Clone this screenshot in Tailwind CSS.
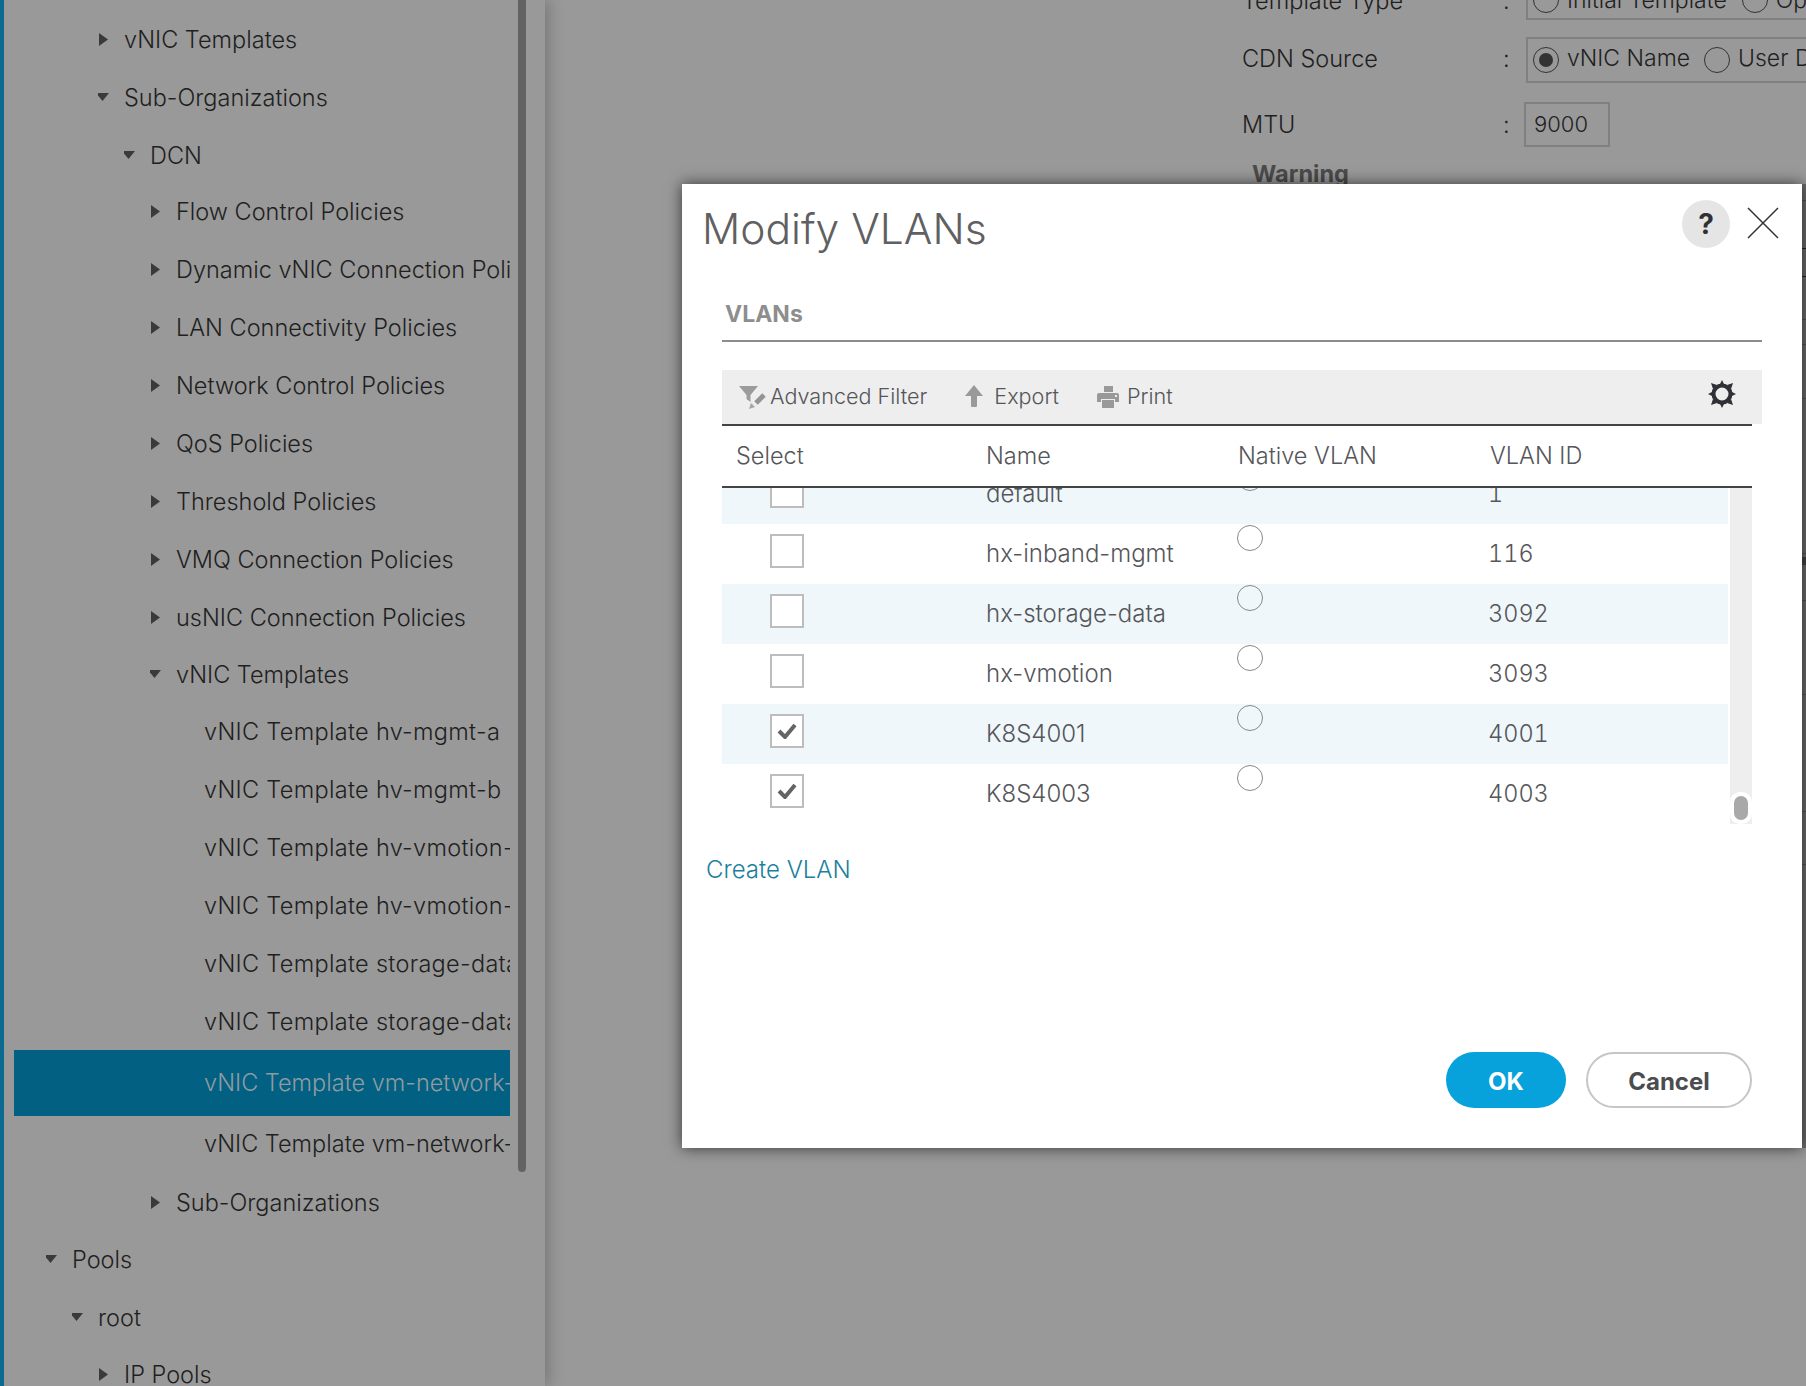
<!DOCTYPE html>
<html lang="en">
<head>
    <meta charset="UTF-8">
    <script src="https://cdn.jsdelivr.net/npm/@tailwindcss/browser@4"></script>
    <title>Modify VLANs</title>
</head>
<body class="bg-[#999999] font-['Inter',sans-serif] font-light">
<div class="relative w-[1806px] h-[1386px] overflow-hidden flex text-[23.5px] text-[#1f1f1f]">

    <!-- left tree -->
    <div class="w-[545px] h-full shrink-0 flex shadow-[4px_0_14px_rgba(0,0,0,0.22)] bg-[#999999] relative">
        <div class="w-[4px] h-full bg-[#0b6a8f] shrink-0"></div>
        <div class="w-[506px] shrink-0 pt-[11px] overflow-hidden">
            <div class="h-[58px] flex items-center pl-[94px] gap-[14px]"><svg class="w-[12px] h-[14px] shrink-0" viewBox="0 0 12 14"><path d="M1 0l9 6.5-9 6.5z" fill="#3a3a3a"/></svg><span class="whitespace-nowrap">vNIC Templates</span></div>
            <div class="h-[58px] flex items-center pl-[94px] gap-[14px]"><svg class="w-[12px] h-[14px] shrink-0" viewBox="0 0 12 14"><path d="M-2 2h13l-6.5 8z" fill="#3a3a3a"/></svg><span class="whitespace-nowrap">Sub-Organizations</span></div>
            <div class="h-[57px] flex items-center pl-[120px] gap-[14px]"><svg class="w-[12px] h-[14px] shrink-0" viewBox="0 0 12 14"><path d="M-2 2h13l-6.5 8z" fill="#3a3a3a"/></svg><span class="whitespace-nowrap">DCN</span></div>
            <div class="h-[56px] flex items-center pl-[146px] gap-[14px]"><svg class="w-[12px] h-[14px] shrink-0" viewBox="0 0 12 14"><path d="M1 0l9 6.5-9 6.5z" fill="#3a3a3a"/></svg><span class="whitespace-nowrap">Flow Control Policies</span></div>
            <div class="h-[59px] flex items-center pl-[146px] gap-[14px]"><svg class="w-[12px] h-[14px] shrink-0" viewBox="0 0 12 14"><path d="M1 0l9 6.5-9 6.5z" fill="#3a3a3a"/></svg><span class="whitespace-nowrap">Dynamic vNIC Connection Poli</span></div>
            <div class="h-[58px] flex items-center pl-[146px] gap-[14px]"><svg class="w-[12px] h-[14px] shrink-0" viewBox="0 0 12 14"><path d="M1 0l9 6.5-9 6.5z" fill="#3a3a3a"/></svg><span class="whitespace-nowrap">LAN Connectivity Policies</span></div>
            <div class="h-[58px] flex items-center pl-[146px] gap-[14px]"><svg class="w-[12px] h-[14px] shrink-0" viewBox="0 0 12 14"><path d="M1 0l9 6.5-9 6.5z" fill="#3a3a3a"/></svg><span class="whitespace-nowrap">Network Control Policies</span></div>
            <div class="h-[58px] flex items-center pl-[146px] gap-[14px]"><svg class="w-[12px] h-[14px] shrink-0" viewBox="0 0 12 14"><path d="M1 0l9 6.5-9 6.5z" fill="#3a3a3a"/></svg><span class="whitespace-nowrap">QoS Policies</span></div>
            <div class="h-[58px] flex items-center pl-[146px] gap-[14px]"><svg class="w-[12px] h-[14px] shrink-0" viewBox="0 0 12 14"><path d="M1 0l9 6.5-9 6.5z" fill="#3a3a3a"/></svg><span class="whitespace-nowrap">Threshold Policies</span></div>
            <div class="h-[58px] flex items-center pl-[146px] gap-[14px]"><svg class="w-[12px] h-[14px] shrink-0" viewBox="0 0 12 14"><path d="M1 0l9 6.5-9 6.5z" fill="#3a3a3a"/></svg><span class="whitespace-nowrap">VMQ Connection Policies</span></div>
            <div class="h-[58px] flex items-center pl-[146px] gap-[14px]"><svg class="w-[12px] h-[14px] shrink-0" viewBox="0 0 12 14"><path d="M1 0l9 6.5-9 6.5z" fill="#3a3a3a"/></svg><span class="whitespace-nowrap">usNIC Connection Policies</span></div>
            <div class="h-[56px] flex items-center pl-[146px] gap-[14px]"><svg class="w-[12px] h-[14px] shrink-0" viewBox="0 0 12 14"><path d="M-2 2h13l-6.5 8z" fill="#3a3a3a"/></svg><span class="whitespace-nowrap">vNIC Templates</span></div>
            <div class="h-[58px] flex items-center pl-[200px] whitespace-nowrap tracking-[0.3px]">vNIC Template hv-mgmt-a</div>
            <div class="h-[58px] flex items-center pl-[200px] whitespace-nowrap tracking-[0.3px]">vNIC Template hv-mgmt-b</div>
            <div class="h-[58px] flex items-center pl-[200px] whitespace-nowrap tracking-[0.3px]">vNIC Template hv-vmotion-</div>
            <div class="h-[58px] flex items-center pl-[200px] whitespace-nowrap tracking-[0.3px]">vNIC Template hv-vmotion-</div>
            <div class="h-[58px] flex items-center pl-[200px] whitespace-nowrap tracking-[0.3px]">vNIC Template storage-data</div>
            <div class="h-[57px] flex items-center pl-[200px] whitespace-nowrap tracking-[0.3px]">vNIC Template storage-data</div>
            <div class="h-[66px] ml-[10px] flex items-center pl-[190px] whitespace-nowrap bg-[#026082] text-[#8f9ba1]">vNIC Template vm-network-</div>
            <div class="h-[56px] flex items-center pl-[200px] whitespace-nowrap">vNIC Template vm-network-</div>
            <div class="h-[62px] flex items-center pl-[146px] gap-[14px]"><svg class="w-[12px] h-[14px] shrink-0" viewBox="0 0 12 14"><path d="M1 0l9 6.5-9 6.5z" fill="#3a3a3a"/></svg><span class="whitespace-nowrap">Sub-Organizations</span></div>
            <div class="h-[52px] flex items-center pl-[42px] gap-[14px]"><svg class="w-[12px] h-[14px] shrink-0" viewBox="0 0 12 14"><path d="M-2 2h13l-6.5 8z" fill="#3a3a3a"/></svg><span class="whitespace-nowrap">Pools</span></div>
            <div class="h-[64px] flex items-center pl-[68px] gap-[14px]"><svg class="w-[12px] h-[14px] shrink-0" viewBox="0 0 12 14"><path d="M-2 2h13l-6.5 8z" fill="#3a3a3a"/></svg><span class="whitespace-nowrap">root</span></div>
            <div class="h-[50px] flex items-center pl-[94px] gap-[14px]"><svg class="w-[12px] h-[14px] shrink-0" viewBox="0 0 12 14"><path d="M1 0l9 6.5-9 6.5z" fill="#3a3a3a"/></svg><span class="whitespace-nowrap">IP Pools</span></div>
        </div>
        <!-- tree scrollbar -->
        <div class="w-[8px] h-[1172px] ml-[8px] bg-[#636363] rounded-b-[4px] shrink-0"></div>
    </div>

    <!-- form behind the dialog -->
    <div class="flex-1 pl-[697px] -mt-[18px] min-w-0 overflow-hidden">
        <div class="h-[38px] flex items-center">
            <span class="w-[261px] shrink-0 whitespace-nowrap">Template Type</span><span class="w-[23px] shrink-0">:</span>
            <div class="h-[38px] w-[320px] shrink-0 border-2 border-t-0 border-r-0 border-[#808080] pl-[5px] flex items-center gap-[8px] whitespace-nowrap text-[23px]">
                <span class="w-[26px] h-[26px] rounded-full border border-[#333333] shrink-0"></span>Initial Template<span class="w-[26px] h-[26px] rounded-full border border-[#333333] shrink-0 ml-[7px]"></span>Op
            </div>
        </div>
        <div class="h-[46px] mt-[17px] flex items-center">
            <span class="w-[261px] shrink-0 whitespace-nowrap -mt-[2px]">CDN Source</span><span class="w-[23px] shrink-0 -mt-[2px]">:</span>
            <div class="h-[46px] w-[320px] shrink-0 border-2 border-r-0 border-[#808080] pl-[5px] flex items-center gap-[8px] whitespace-nowrap text-[23px] -mt-[1px]">
                <span class="w-[26px] h-[26px] rounded-full border border-[#333333] shrink-0 flex items-center justify-center"><span class="w-[14px] h-[14px] rounded-full bg-[#333333]"></span></span><span class="-mt-[2px]">vNIC Name</span><span class="w-[26px] h-[26px] rounded-full border border-[#333333] shrink-0 ml-[6px]"></span><span class="-mt-[2px]">User D</span>
            </div>
        </div>
        <div class="h-[45px] mt-[19px] flex items-center">
            <span class="w-[261px] shrink-0 whitespace-nowrap">MTU</span><span class="w-[21px] shrink-0">:</span>
            <div class="h-[45px] w-[86px] shrink-0 border-2 border-[#808080] pl-[8px] flex items-center text-[22px]">9000</div>
        </div>
        <div class="mt-[12px] ml-[10px] font-bold text-[#4b4b4b] leading-[30px]">Warning</div>
    </div>

    <!-- bits of the form that show past the dialog's right edge -->
    <div class="absolute right-0 top-[184px] w-[4px] h-[964px] bg-[#6d6d6d] flex flex-col">
        <div class="h-[1px] mt-[16px] bg-[#555555]"></div>
        <div class="h-[29px] mt-[47px] border-y border-[#222222]"></div>
        <div class="h-[1px] mt-[42px] bg-[#555555]"></div>
        <div class="h-[1px] mt-[24px] bg-[#555555]"></div>
        <div class="h-[1px] mt-[53px] bg-[#555555]"></div>
        <div class="h-[1px] mt-[154px] bg-[#555555]"></div>
        <div class="h-[8px] mt-[3px] bg-[#444444]"></div>
        <div class="h-[1px] mt-[35px] bg-[#555555]"></div>
        <div class="h-[1px] mt-[93px] bg-[#555555]"></div>
        <div class="h-[1px] mt-[116px] bg-[#555555]"></div>
        <div class="h-[1px] mt-[52px] bg-[#555555]"></div>
    </div>

    <!-- Modify VLANs dialog -->
    <div class="absolute left-[682px] top-[184px] w-[1120px] h-[964px] bg-white shadow-[0_0_14px_rgba(0,0,0,0.65)] flex flex-col text-[#55565a]">
        <div class="h-[88px] flex items-start shrink-0">
            <div class="text-[42.5px] text-[#5f6062] pl-[20px] pt-[19px] leading-[52px] flex-1">Modify VLANs</div>
            <div class="w-[48px] h-[48px] mt-[16px] rounded-full bg-[#e5e5e5] flex items-center justify-center text-[28px] font-bold text-[#2f3136]">?</div>
            <svg class="w-[32px] h-[32px] mt-[23px] ml-[17px] mr-[23px]" viewBox="0 0 32 32"><path d="M1 1l30 30M31 1L1 31" stroke="#333333" stroke-width="1.5" fill="none"/></svg>
        </div>

        <div class="ml-[40px] w-[1040px] h-[70px] pt-[27px] pl-[3px] shrink-0 border-b-2 border-[#8c8c8c] font-bold text-[#8e8e8e] text-[23px] leading-[30px]">VLANs</div>

        <!-- toolbar -->
        <div class="ml-[40px] mt-[28px] w-[1040px] h-[54px] shrink-0 bg-[#eeeeee] flex items-center pl-[17px] pr-[26px] text-[21.6px]">
            <svg class="w-[27px] h-[24px] shrink-0" viewBox="0 0 27 24"><path d="M0 1h19l-7.5 9v7l-4-3v-4z" fill="#9b9b9b"/><path d="M25 10l-8 8" stroke="#949494" stroke-width="5" fill="none"/><path d="M10 24l2-6 4 4z" fill="#a5a5a5"/></svg>
            <span class="ml-[4px] -mt-[1px] whitespace-nowrap">Advanced Filter</span>
            <svg class="w-[18px] h-[22px] ml-[38px] -mt-[2px] shrink-0" viewBox="0 0 18 22"><path d="M9 0l9 11h-6v10q0 1-1 1H7q-1 0-1-1V11H0z" fill="#999999"/></svg>
            <span class="ml-[11px] -mt-[1px] whitespace-nowrap">Export</span>
            <svg class="w-[22px] h-[22px] ml-[38px] -mt-[1px] shrink-0" viewBox="0 0 22 22"><path d="M7 0h9v6H7z" fill="#999999"/><path d="M2 7h18q2 0 2 2v7h-4v-3H4v3H0V9q0-2 2-2z" fill="#999999"/><path d="M5 14h12v8H5z" fill="#999999"/><path d="M18 9h2v2h-2z" fill="#eeeeee"/></svg>
            <span class="ml-[8px] -mt-[1px] whitespace-nowrap">Print</span>
            <svg class="w-[28px] h-[28px] ml-auto shrink-0 -mt-[6px]" viewBox="0 0 28 28">
                <circle cx="14" cy="14" r="8.5" fill="none" stroke="#2f3136" stroke-width="4"/>
                <path d="M11 6l3-6 3 6zM11 22l3 6 3-6zM6 11l-6 3 6 3zM22 11l6 3-6 3zM5 9L3 3l6 2zM23 9l2-6-6 2zM5 19l-2 6 6-2zM23 19l2 6-6-2z" fill="#2f3136"/>
            </svg>
        </div>

        <!-- table -->
        <div class="ml-[40px] w-[1030px] shrink-0">
            <div class="h-[64px] grid grid-cols-[264px_252px_252px_1fr] items-center border-y-2 border-[#444444] text-[23.5px]">
                <span class="pl-[14px]">Select</span><span>Name</span><span>Native VLAN</span><span>VLAN ID</span>
            </div>
            <div class="flex h-[336px] gap-[2px] overflow-hidden">
                <div class="w-[1006px] shrink-0 -mt-[24px] text-[24px] self-start">
                    <div class="h-[60px] bg-[#eff7fb] grid grid-cols-[264px_252px_252px_1fr]">
                        <div class="pl-[48px] pt-[10px]"><span class="block w-[34px] h-[34px] border-2 border-[#bdbdbd] bg-white"></span></div>
                        <div class="leading-[60px]">default</div>
                        <div class="pt-[1px] -ml-[1px]"><span class="block w-[26px] h-[26px] rounded-full border border-[#888888]"></span></div>
                        <div class="leading-[60px] -ml-[2px] tabular-nums text-[23.5px]">1</div>
                    </div>
                    <div class="h-[60px] grid grid-cols-[264px_252px_252px_1fr]">
                        <div class="pl-[48px] pt-[10px]"><span class="block w-[34px] h-[34px] border-2 border-[#bdbdbd] bg-white"></span></div>
                        <div class="leading-[60px]">hx-inband-mgmt</div>
                        <div class="pt-[1px] -ml-[1px]"><span class="block w-[26px] h-[26px] rounded-full border border-[#888888]"></span></div>
                        <div class="leading-[60px] -ml-[2px] tabular-nums text-[23.5px]">116</div>
                    </div>
                    <div class="h-[60px] bg-[#eff7fb] grid grid-cols-[264px_252px_252px_1fr]">
                        <div class="pl-[48px] pt-[10px]"><span class="block w-[34px] h-[34px] border-2 border-[#bdbdbd] bg-white"></span></div>
                        <div class="leading-[60px]">hx-storage-data</div>
                        <div class="pt-[1px] -ml-[1px]"><span class="block w-[26px] h-[26px] rounded-full border border-[#888888]"></span></div>
                        <div class="leading-[60px] -ml-[2px] tabular-nums text-[23.5px]">3092</div>
                    </div>
                    <div class="h-[60px] grid grid-cols-[264px_252px_252px_1fr]">
                        <div class="pl-[48px] pt-[10px]"><span class="block w-[34px] h-[34px] border-2 border-[#bdbdbd] bg-white"></span></div>
                        <div class="leading-[60px]">hx-vmotion</div>
                        <div class="pt-[1px] -ml-[1px]"><span class="block w-[26px] h-[26px] rounded-full border border-[#888888]"></span></div>
                        <div class="leading-[60px] -ml-[2px] tabular-nums text-[23.5px]">3093</div>
                    </div>
                    <div class="h-[60px] bg-[#eff7fb] grid grid-cols-[264px_252px_252px_1fr]">
                        <div class="pl-[48px] pt-[10px]"><span class="flex items-center justify-center w-[34px] h-[34px] border-2 border-[#bdbdbd] bg-white"><svg class="w-[20px] h-[16px]" viewBox="0 0 20 16"><path d="M2 8l6 6L18 2" fill="none" stroke="#636466" stroke-width="4"/></svg></span></div>
                        <div class="leading-[60px]">K8S4001</div>
                        <div class="pt-[1px] -ml-[1px]"><span class="block w-[26px] h-[26px] rounded-full border border-[#888888]"></span></div>
                        <div class="leading-[60px] -ml-[2px] tabular-nums text-[23.5px]">4001</div>
                    </div>
                    <div class="h-[60px] grid grid-cols-[264px_252px_252px_1fr]">
                        <div class="pl-[48px] pt-[10px]"><span class="flex items-center justify-center w-[34px] h-[34px] border-2 border-[#bdbdbd] bg-white"><svg class="w-[20px] h-[16px]" viewBox="0 0 20 16"><path d="M2 8l6 6L18 2" fill="none" stroke="#636466" stroke-width="4"/></svg></span></div>
                        <div class="leading-[60px]">K8S4003</div>
                        <div class="pt-[1px] -ml-[1px]"><span class="block w-[26px] h-[26px] rounded-full border border-[#888888]"></span></div>
                        <div class="leading-[60px] -ml-[2px] tabular-nums text-[23.5px]">4003</div>
                    </div>
                </div>
                <!-- list scrollbar -->
                <div class="w-[22px] h-full bg-[#eeeeee] flex flex-col justify-end">
                    <div class="h-[32px] bg-white rounded-[10px] p-[4px]"><div class="h-full bg-[#a9a9a9] rounded-[7px]"></div></div>
                </div>
            </div>
        </div>

        <div class="ml-[24px] mt-[31px] text-[24px] leading-[30px] text-[#1b7f9e]">Create VLAN</div>

        <div class="mt-auto pb-[40px] pr-[50px] flex justify-end gap-[20px] text-[24px] font-bold">
            <div class="w-[120px] h-[56px] pt-[3px] rounded-full bg-[#07a2dc] text-white flex items-center justify-center">OK</div>
            <div class="w-[166px] h-[56px] pt-[3px] rounded-full border-2 border-[#c6c6c6] text-[#4b4c50] flex items-center justify-center">Cancel</div>
        </div>
    </div>
</div>
</body>
</html>
